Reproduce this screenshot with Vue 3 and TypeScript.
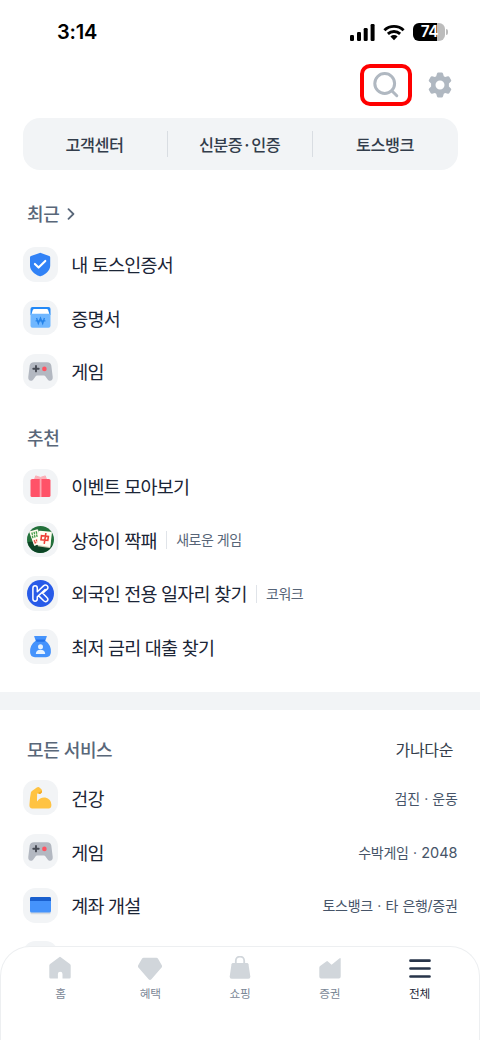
<script setup lang="ts">
import { defineComponent, h } from 'vue'

interface Service {
  icon: string
  name: string
  tag?: string
  detail?: string
  count?: string
}

const shortcuts: string[] = ['고객센터', '신분증·인증', '토스뱅크']

const recent: Service[] = [
  { icon: 'shield', name: '내 토스인증서' },
  { icon: 'document', name: '증명서' },
  { icon: 'game', name: '게임' },
]

const recommended: Service[] = [
  { icon: 'gift', name: '이벤트 모아보기' },
  { icon: 'mahjong', name: '상하이 짝패', tag: '새로운 게임' },
  { icon: 'kowork', name: '외국인 전용 일자리 찾기', tag: '코워크' },
  { icon: 'loan', name: '최저 금리 대출 찾기' },
]

const services: Service[] = [
  { icon: 'muscle', name: '건강', detail: '검진 · 운동' },
  { icon: 'game', name: '게임', detail: '수박게임 · ', count: '2048' },
  { icon: 'account', name: '계좌 개설', detail: '토스뱅크 · 타 은행/증권' },
  { icon: 'none', name: '' },
]

const art: Record<string, string> = {
  shield:
    '<path d="M16.700 5.900q.6-.2 1.200 0L26.200 9q1 .4 1 1.500v8.200c0 5-5 8.600-9.100 10.400q-.9.4-1.800 0C12.200 27.300 7 23.700 7 18.700v-8.200Q7 9.400 8 9z" fill="#3182f6"/><path d="m11.900 16.900 3.700 3.700 6.700-6.700" fill="none" stroke="#fff" stroke-width="2.100" stroke-linecap="round" stroke-linejoin="round"/>',
  document:
    '<path d="M7.500 15V9q0-2 2-2h16q2 0 2 2v6z" fill="#2389f7"/><path d="m8.800 13 1-3q.4-1 1.400-1h12.500q1 0 1.400 1l1 3v2H8.800z" fill="#fff"/><path d="M7.500 12.500q.1 1.300 1.600 1.300h16.800q1.500 0 1.600-1.300v13.300q0 2-2 2h-16q-2 0-2-2z" fill="#70b7ff"/><path d="m13.600 18 1.700 5.500 2.200-5.500 2.200 5.500 1.700-5.500M12.600 20.800h9.800" fill="none" stroke="#2583ea" stroke-width="1.300"/>',
  game:
    '<path d="M11 8.300h13q3.500 0 4.300 3.200l1.400 11.300c.6 4.200-3.400 5.300-5.200 2.400l-2-2.700q-.6-.9-1.700-.9h-6.600q-1.100 0-1.700.9l-2 2.700C8.700 28.100 4.700 27 5.300 22.800l1.400-11.300q.8-3.200 4.300-3.200z" fill="#b3b8c1"/><path d="M13 12v5.400M10.300 14.700h5.400" stroke="#464a53" stroke-width="1.900" stroke-linecap="round"/><circle cx="21.400" cy="14.900" r="2.300" fill="#ff5361"/>',
  gift:
    '<path d="m17.500 8.400-4.800-1.500-1.200 3.600h12l-1.200-3.600z" fill="#fcaeb6" stroke="#fcaeb6" stroke-linejoin="round"/><rect x="7.500" y="10" width="20" height="18" rx="1.600" fill="#ff5268"/><path d="M16.700 10h1.800v18h-1.800z" fill="#fca6b1"/>',
  mahjong:
    '<circle cx="17.500" cy="17.500" r="13.500" fill="#23713b"/><path d="M4.500 20q2.200 9.700 12 11 8.500 0 12.500-7l-10-5z" fill="#0c4425"/><path d="m7 10.500 8-3 4.500 13.300-8 3z" fill="#cdd8bb"/><path d="m6 9.500 8.500-2.200 4.700 13.800-8 2.600z" fill="#fffbed"/><g stroke="#429d47" stroke-width="1.300"><path d="m8.800 10.500.7 2.400m1.500-3 .7 2.400m1.400-3 .7 2.400m-4.500 2 .7 2.400m1.400-3 .7 2.400m1.400-3 .7 2.400"/></g><path d="m10.800 19.200 3.700-1.200m-3 3 3.700-1.200" stroke="#e44336" stroke-width="1.500" stroke-dasharray="1.500 .7"/><path d="m16.200 10.700 11 .4q1 .1.900 1.200l-.7 12.600q-.1 1.300-1.300 1.200l-11.400-1.900z" fill="#c8c5ac"/><path d="m17 8.800 10.900.9q1.100.1 1 1.200L27.400 24q-.1 1-1.200.9L14.900 22.900q-1-.2-.9-1.200l1.600-11.700q.1-1.300 1.400-1.200z" fill="#fffef1"/><path d="m18.500 13.700-.5 4 6.800.7.600-4zM22.900 11l-1.700 10.800" fill="none" stroke="#ee4035" stroke-width="1.600"/>',
  kowork:
    '<circle cx="17.500" cy="17.500" r="13.500" fill="#285be8"/><path d="M14.300 15.800v-3.600q0-2.400-2.200-2.400t-2.200 2.400v10.600q0 2.400 2.200 2.400t2.200-2.400v-1.900l7.800-7.400m-7.800 2.300 6.200-5.900q1.900-1.700 3.700-.1 1.700 1.800-.3 3.600l-4.200 3.900 4.200 4.200q1.900 1.800.3 3.400-1.700 1.600-3.500-.1l-4.200-4.200" fill="none" stroke="#fff" stroke-width="1.500" stroke-linecap="round" stroke-linejoin="round"/>',
  loan:
    '<path d="M13.500 11q-7 5-6.400 12.300Q7.400 28.200 12 28.200h11q4.600 0 4.900-4.900Q28.500 16 21.500 11z" fill="#4593fc"/><path d="M11.200 7.600q-.2-.7.700-.7h11.200q.9 0 .7.700l-1.800 4.700h-9z" fill="#4593fc"/><path d="M12.700 10.500h9.600l-.8 2.300h-8z" fill="#2272eb"/><circle cx="17.500" cy="17.800" r="2.500" fill="#e7f3ff"/><path d="M12.800 25q.4-4.200 4.700-4.200t4.700 4.200z" fill="#e7f3ff"/>',
  muscle:
    '<path d="m9.300 10.700 4.500-3.300q1.200-.8 2.300-.2l2.300 2q1.300 1.400.4 3.100l-1.300 1.400q-1.700.7-2.300-.6l-1.100 1-.1 7.500q3.200-4.700 8.300-4.100 5.800 1.300 6.100 7.300.2 3.600-2.900 3.600H9.300q-3-.1-2.900-3.200.4-7.600 1.500-12.700.3-1.100 1.400-1.800z" fill="#ffc342"/><path d="m15.200 12.700 3.500-1.800q.7.800.1 1.500l-1.300 1.400q-1.600.7-2.300-.5z" fill="#f4a923"/>',
  account:
    '<path d="M7.500 24h20v1.300q0 1-1.200 1H8.700q-1.200 0-1.200-1z" fill="#d5d9df"/><rect x="7" y="9" width="21" height="15.600" rx="1.500" fill="#4593fc"/><path d="M7 13v-2.500Q7 9 8.500 9h18q1.500 0 1.500 1.500V13z" fill="#195fce"/>',
  none: '',
}

const tabs = [
  { name: '홈', art: '<path d="M11.200 1.200q.8-.7 1.600 0l9.100 6.700q.8.600.8 1.500v11.900q0 1.300-1.300 1.300h-6.900V18q0-2.200-2.300-2.200T9.900 18v4.600H2.600q-1.300 0-1.300-1.300V9.400q0-.9.800-1.500z"/>' },
  { name: '혜택', art: '<path d="M5.700 1.800h12.600q1 0 1.600.8l3.900 6.700q.7 1.200-.2 2.300L13.400 23.300q-1.400 1.300-2.800 0L.4 11.600q-.9-1.100-.2-2.300l3.900-6.700q.6-.8 1.600-.8z"/>' },
  { name: '쇼핑', art: '<path d="M7.800 8V4.700a4.200 4.200 0 0 1 8.400 0V8" fill="none" stroke="#d1d6db" stroke-width="1.800"/><path d="M5 7h14q1.300 0 1.500 1.300l1.800 12.200q.2 2.200-2 2.200H3.700q-2.200 0-2-2.200L3.500 8.300Q3.700 7 5 7z"/>' },
  { name: '증권', art: '<path d="M1.300 11.700q0-1 .8-1.700l6.200-4.600q.9-.7 1.600 0l3.700 3.400 7.700-6.300q1.400-1 1.400.6v17.500q0 1.900-1.800 1.900H3.100q-1.800 0-1.800-1.900z"/>' },
  { name: '전체', art: '<path d="M2.500 4.700h19M2.500 12.500h19M2.500 20.500h19" fill="none" stroke="#273449" stroke-width="2.700" stroke-linecap="round"/>' },
]

const ServiceList = defineComponent({
  props: { items: { type: Array as () => Service[], required: true } },
  setup(props) {
    return () =>
      h('ul', { class: 'service-list' }, props.items.map((item) =>
        h('li', { class: 'service' }, [
          h('span', { class: 'service-icon' }, [
            h('svg', { viewBox: '0 0 35 35', innerHTML: art[item.icon] }),
          ]),
          h('span', { class: 'service-name' }, item.name),
          item.tag ? h('span', { class: 'service-tag' }, item.tag) : null,
          item.detail
            ? h('span', { class: 'service-detail' }, [
                item.detail,
                item.count ? h('span', { class: 'service-count' }, item.count) : null,
              ])
            : null,
        ]),
      ))
  },
})
</script>

<template>
  <main class="screen">
    <header class="status">
      <span class="time">3:14</span>
      <div class="signals">
        <svg class="cell" viewBox="0 0 25 17">
          <rect x="0" y="11" width="4" height="6" rx="1.200" />
          <rect x="7" y="8" width="4" height="9" rx="1.200" />
          <rect x="13.700" y="4" width="4" height="13" rx="1.200" />
          <rect x="20.600" y="0" width="4" height="17" rx="1.200" />
        </svg>
        <svg class="wifi" viewBox="0 0 22 17">
          <path d="M1.400 6.200a14 14 0 0 1 19.200 0M4.900 9.900a9 9 0 0 1 12.200 0" fill="none" stroke="#000" stroke-width="2.900" />
          <path d="M11 16.200 7.400 12.500a5.200 5.200 0 0 1 7.200 0z" />
        </svg>
        <div class="battery"><span>74</span></div>
        <i class="battery-tip"></i>
      </div>
    </header>

    <div class="tools">
      <div class="search">
        <svg viewBox="0 0 26 26">
          <circle cx="11.700" cy="11.500" r="9.900" />
          <path d="m18.800 18.700 5 5" />
        </svg>
      </div>
      <svg class="gear" viewBox="0 0 24 26">
        <path fill-rule="evenodd" d="M9 1.500Q9.300.5 10.300.5h3.400q1 0 1.300 1l.8 2.700 1.300.8 2.800-.7q1-.2 1.500.7l1.700 2.900q.5.900-.2 1.700l-2 2v2.800l2 2q.7.800.2 1.700L21.400 21q-.5.900-1.500.7l-2.800-.7-1.300.8-.8 2.700q-.3 1-1.300 1h-3.400q-1 0-1.300-1l-.8-2.700-1.300-.8-2.800.7q-1 .2-1.500-.7L.9 18.100q-.5-.9.200-1.700l2-2v-2.800l-2-2Q.4 8.800.9 7.900L2.600 5q.5-.9 1.500-.7l2.800.7 1.300-.8zM12 8.500a4.500 4.500 0 1 0 0 9 4.500 4.500 0 0 0 0-9z" />
      </svg>
    </div>

    <nav class="shortcuts">
      <span v-for="s in shortcuts" :key="s">{{ s }}</span>
    </nav>

    <section class="recent">
      <h2>최근
        <svg viewBox="0 0 8 12"><path d="m1.500 1.200 4.900 4.800-4.900 4.800" /></svg>
      </h2>
      <ServiceList :items="recent" />
    </section>

    <section class="recommended">
      <h2>추천</h2>
      <ServiceList :items="recommended" />
    </section>

    <section class="all">
      <div class="all-head">
        <h2>모든 서비스</h2>
        <span class="sort">가나다순</span>
      </div>
      <ServiceList :items="services" />
    </section>

    <nav class="tabs">
      <div v-for="(tab, i) in tabs" :key="tab.name" class="tab" :class="{ active: i === 4 }">
        <svg viewBox="0 0 24 24" v-html="tab.art"></svg>
        <span>{{ tab.name }}</span>
      </div>
    </nav>
  </main>
</template>

<style>
body {
  margin: 0;
  background: #fff;
}

.service-list {
  list-style: none;
  margin: 0;
  padding: 0;
}

.service {
  display: flex;
  align-items: center;
  height: 53.6px;
  padding: 0 22.500px;
  line-height: 24px;
  white-space: pre;
}

.service-icon {
  width: 35px;
  height: 35px;
  border-radius: 12.500px;
  background: #f2f4f6;
}

.service-icon svg {
  display: block;
  width: 35px;
  height: 35px;
}

.service-name {
  margin-left: 13.700px;
  padding-top: 2px;
  font-size: 18.500px;
  letter-spacing: -0.800px;
  color: #1b2536;
}

.service-tag {
  display: flex;
  align-items: center;
  margin-left: 9px;
  padding-top: 1px;
  font-size: 14px;
  letter-spacing: -0.500px;
  color: #576578;
}

.service-tag::before {
  content: '';
  width: 1.500px;
  height: 18px;
  margin-right: 9px;
  background: #e0e4e9;
}

.service-detail {
  margin-left: auto;
  padding-top: 2px;
  font-size: 14px;
  letter-spacing: -0.300px;
  word-spacing: 0.800px;
  color: #465468;
}

.service-count {
  font-size: 14.500px;
  letter-spacing: 0;
}
</style>

<style scoped>
.screen {
  position: relative;
  width: 480px;
  height: 1040px;
  overflow: hidden;
  background: #fff;
  font-family: Inter, 'Noto Sans CJK KR', sans-serif;
}

.status {
  display: flex;
  justify-content: space-between;
  height: 64px;
  padding: 0 32px 0 57px;
  box-sizing: border-box;
}

.time {
  padding-top: 20px;
  font: 600 20px/25px Inter, sans-serif;
  letter-spacing: -0.200px;
}

.signals {
  display: flex;
  align-items: center;
  height: 64px;
}

.cell {
  width: 25px;
  height: 17px;
}

.wifi {
  width: 22px;
  height: 17px;
  margin: 0 8px 0 8px;
}

.battery {
  width: 32px;
  height: 18px;
  padding-left: 1px;
  box-sizing: border-box;
  border-radius: 6px;
  background: linear-gradient(90deg, #000 75%, #bcbcbc 75%);
  color: #fff;
  font: 600 15.500px/18px Inter, sans-serif;
  letter-spacing: -0.500px;
  text-align: center;
}

.battery-tip {
  width: 2px;
  height: 6px;
  margin: 0 0 0 1px;
  border-radius: 0 3px 3px 0;
  background: #bcbcbc;
}

.tools {
  display: flex;
  align-items: center;
  justify-content: flex-end;
  gap: 16px;
  height: 42px;
  padding-right: 28px;
}

.search {
  display: flex;
  align-items: center;
  justify-content: center;
  width: 52px;
  height: 42px;
  box-sizing: border-box;
  border: 4px solid #f00;
  border-radius: 10px;
}

.search svg {
  width: 26px;
  height: 26px;
  fill: none;
  stroke: #b0b8c1;
  stroke-width: 3;
  stroke-linecap: round;
}

.gear {
  width: 24px;
  height: 26px;
  fill: #b0b8c1;
}

.shortcuts {
  display: grid;
  grid-template-columns: repeat(3, 1fr);
  align-items: center;
  height: 52px;
  margin: 12px 22.500px 0;
  border-radius: 17px;
  background: #f2f4f6;
  color: #333d4b;
  font-family: 'Noto Sans CJK KR', sans-serif;
  font-size: 16.300px;
  font-weight: 500;
  letter-spacing: -0.500px;
}

.shortcuts span {
  height: 26px;
  line-height: 26px;
  text-align: center;
}

.shortcuts span:not(:last-child) {
  border-right: 1px solid #d9dde2;
}

h2 {
  display: flex;
  align-items: center;
  height: 26px;
  margin: 0;
  padding-left: 27px;
  color: #596779;
  font-size: 18px;
  line-height: 28px;
  font-weight: 500;
  letter-spacing: -0.400px;
}

.recent h2,
.recommended h2,
.all h2 {
  box-sizing: border-box;
  padding-top: 2px;
}

h2 svg {
  width: 8px;
  height: 12px;
  margin-top: -2px;
  margin-left: 8px;
  fill: none;
  stroke: #596779;
  stroke-width: 1.800;
  stroke-linecap: round;
  stroke-linejoin: round;
}

.recent {
  padding-top: 31px;
}

.recent h2 {
  margin-bottom: 10.500px;
}

.recommended h2 {
  margin-bottom: 8px;
}

.recommended {
  padding-top: 27px;
  padding-bottom: 18px;
  border-bottom: 18px solid #f2f4f6;
}

.all-head {
  display: flex;
  align-items: center;
  justify-content: space-between;
  padding: 27px 27px 8.500px 0;
}

.sort {
  color: #333d4b;
  font-size: 16px;
  line-height: 26px;
  letter-spacing: -0.350px;
}

.tabs {
  position: absolute;
  left: 0;
  right: 0;
  bottom: 0;
  height: 94px;
  display: grid;
  grid-template-columns: repeat(5, 1fr);
  padding: 9px 14.600px 0;
  box-sizing: border-box;
  border: 1px solid #edeff1;
  border-bottom: 0;
  border-radius: 30px 30px 0 0;
  background: #fff;
}

.tab {
  display: flex;
  flex-direction: column;
  align-items: center;
  color: #7b8796;
  font-size: 11.700px;
  line-height: 16px;
  letter-spacing: -0.300px;
}

.tab svg {
  width: 24px;
  height: 24px;
  margin-bottom: 6px;
  fill: #d1d6db;
}

.tab.active {
  color: #1b2536;
}
</style>
